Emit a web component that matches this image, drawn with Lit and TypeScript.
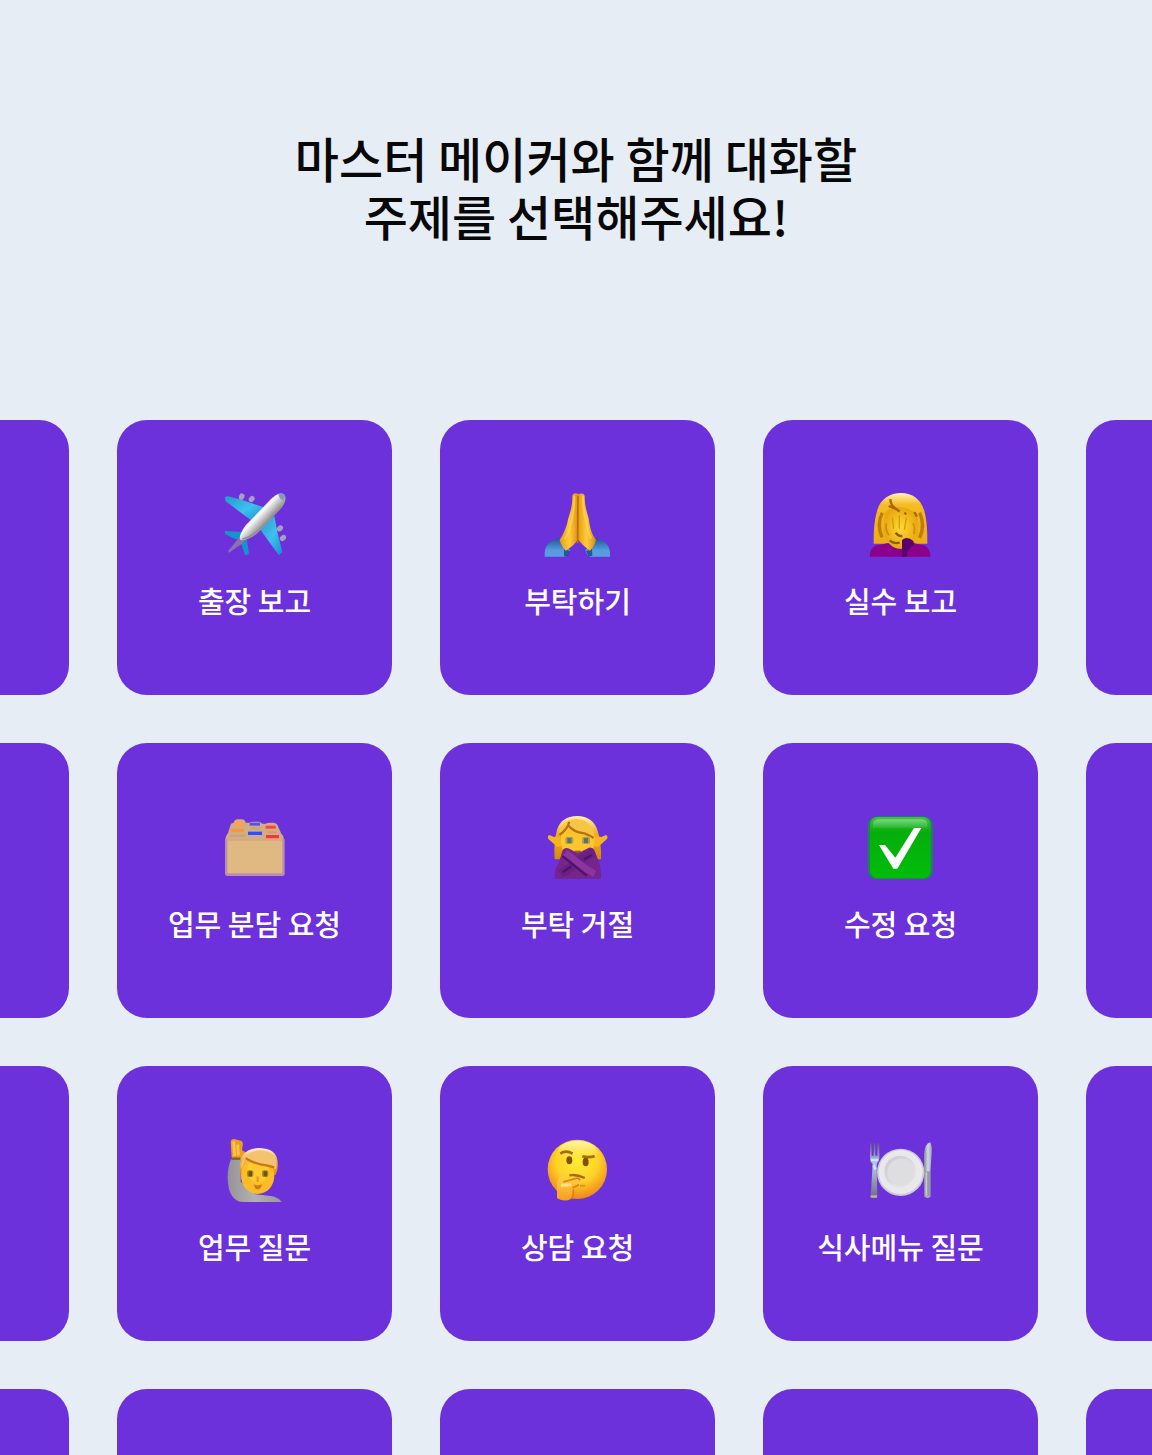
import { LitElement, html, svg, css, type TemplateResult, type SVGTemplateResult } from "lit";
import { customElement } from "lit/decorators.js";

interface Topic {
  label: string;
  icon: SVGTemplateResult;
}

const airplane = svg`
  <defs>
    <linearGradient id="wing" x1="0" y1="0" x2="1" y2="1"><stop offset="0" stop-color="#2498c8"/><stop offset=".55" stop-color="#3fc0f0"/><stop offset="1" stop-color="#168fc8"/></linearGradient>
    <linearGradient id="body" gradientUnits="userSpaceOnUse" x1="148" y1="90" x2="182" y2="122"><stop offset="0" stop-color="#e2e2e4"/><stop offset=".45" stop-color="#f6f6f6"/><stop offset="1" stop-color="#a3a0a4"/></linearGradient>
  </defs>
  <g fill="#a99fc0"><ellipse cx="110" cy="50" rx="8" ry="10" transform="rotate(25 110 50)"/><ellipse cx="140" cy="57" rx="8" ry="10" transform="rotate(40 140 57)"/><ellipse cx="225" cy="145" rx="8" ry="10" transform="rotate(45 225 145)"/><ellipse cx="234" cy="174" rx="8" ry="10" transform="rotate(50 234 174)"/></g>
  <path d="M59 53 66 48 112 60 176 82 140 122 62 64Z" fill="url(#wing)"/>
  <path d="M208 108 218 160 232 216 222 226 162 144Z" fill="url(#wing)"/>
  <path d="M59 153 114 156 106 179 88 176 60 162Z" fill="#1793c9"/>
  <path d="M104 178 126 180 132 222 120 226Z" fill="#1793c9"/>
  <path d="M108 166 69 214 72 218 118 186Z" fill="#8872b4"/>
  <path d="M237 43c9 10 4 27-8 41l-66 70c-17 17-36 26-49 27-12 1-11-9-7-19 5-12 12-24 24-35l62-65c16-16 31-27 44-19Z" fill="url(#body)"/>
  <path d="M220 41q17-3 20 6 0 9-6 14Q222 56 220 41Z" fill="#7f9eb1"/>
  <path d="M112 177Q142 171 172 140L230 79" fill="none" stroke="#918d92" stroke-width="5"/>`;

const prayer = svg`
  <defs>
    <linearGradient id="handL" x1="0" x2="1"><stop offset="0" stop-color="#e89a14"/><stop offset=".5" stop-color="#ffcb3c"/><stop offset="1" stop-color="#d88a12"/></linearGradient>
    <linearGradient id="cuff" x1="0" y1="0" x2="0" y2="1"><stop offset="0" stop-color="#1c5798"/><stop offset=".65" stop-color="#559bdc"/><stop offset="1" stop-color="#5b9ee3"/></linearGradient>
  </defs>
  <path d="M92 174 126 210Q120 229 108 230H50q-2-26 12-40 12-11 30-16Z" fill="url(#cuff)"/>
  <path d="M206 174 172 210q4 19 16 20h58q2-26-12-40-10-11-28-16Z" fill="url(#cuff)"/>
  <path d="m108 206 18 8-7 14h-11ZM192 206l-18 8 7 14h12Z" fill="#12447e" opacity=".75"/>
  <path d="M153 42q-17-6-20 5c1 27-5 46-12 68-4 25-14 47-26 65 4 14 10 24 18 32 18-10 33-25 38-37Z" fill="url(#handL)"/>
  <path d="M150 42q18-5 20 5c0 26 5 47 12 68 3 25 8 47 22 65-3 13-10 24-18 32-15-11-31-24-37-37Z" fill="url(#handL)"/>
  <path d="M150 47 149 190" stroke="#bc7008" stroke-width="5"/>
  <path d="M139 49Q140 90 128 133q-5 27-18 44M165 49q-1 43 11 85 5 25 14 42" fill="none" stroke="#ffd951" stroke-width="5" opacity=".75"/>`;

const facepalm = svg`
  <defs>
    <linearGradient id="hairA" x1="0" y1="0" x2="0" y2="1"><stop offset="0" stop-color="#fff1b3"/><stop offset=".23" stop-color="#f5bc24"/><stop offset="1" stop-color="#edab16"/></linearGradient>
    <radialGradient id="palm"><stop offset="0" stop-color="#ffd833"/><stop offset="1" stop-color="#e7a80e"/></radialGradient>
  </defs>
  <path d="M68 191c0-27 0-66 11-101 10-34 38-51 71-51 36 0 60 20 70 54 9 34 9 67 9 98Z" fill="url(#hairA)"/>
  <path d="M94 98Q76 133 93 172M206 98q17 39 0 76" fill="none" stroke="#b06f08" stroke-width="10" opacity=".8"/>
  <path d="M101 98q18-17 48-17 36 2 52 34 4 51-15 69l-30 22h-24q-29-19-34-55Z" fill="url(#palm)"/>
  <path d="M118 57q0 17 14 27l14 11M113 78l20 8M160 98l6 5M190 96l8 14" stroke="#a8690c" stroke-width="7" fill="none"/>
  <path d="M124 112l4 34M145 106v40M166 112l-6 38" stroke="#d99a0c" stroke-width="4" fill="none"/>
  <path d="M106 130q-4 18 8 36M186 130q8 12 2 32" stroke="#cf8c0c" stroke-width="5" fill="none"/>
  <path d="M134 158q8 12 20 10M116 182q12 10 30 6" stroke="#8a5a10" stroke-width="7" fill="none"/>
  <path d="M56 230q0-25 17-33l39-8q14 18 41 19l5-28q18-8 32 10l32 7q15 9 17 33Z" fill="#8b008c"/>
  <path d="M153 230V180q15-14 34 3l2 14q-20 5-22 33Z" fill="#5c006d"/>`;

const folders = svg`
  <path d="M86 59q3-10 12-10h12q9 0 12 10h11q3-3 10-3h16q8 0 13 6h10q5-3 12-3h11q13 1 15 14l9 19q8 6 8 18H62q-2-9 7-20l9-28Z" fill="#d2ac84"/>
  <path d="M88 68v-8q2-6 10-6h11q7 1 8 14Z" fill="#ffa14d"/>
  <path d="M79 77h38v10H78Z" fill="#f99736"/>
  <path d="M134 59h31v9h-31Z" fill="#5354e2"/>
  <path d="M129 86h42v10h-42Z" fill="#304dff"/>
  <path d="M182 68h30v9h-30Z" fill="#fa433f"/>
  <path d="M183 96h39v10h-39Z" fill="#ff3039"/>
  <path d="M136 76h30M188 88h27M76 98h46" stroke="#c9a078" stroke-width="5"/>
  <path d="M60 108h179v104q0 7-7 7H67q-7 0-7-7Z" fill="#ba8eb0"/>
  <path d="M67 107h165v104H67Z" fill="#dfb882"/>
  <path d="M67 110h165" stroke="#d3aa80" stroke-width="6"/>`;

const refusal = svg`
  <defs><linearGradient id="hairB" x1="0" y1="0" x2="0" y2="1"><stop offset="0" stop-color="#fff1b2"/><stop offset=".4" stop-color="#f0b01d"/><stop offset="1" stop-color="#d48a0d"/></linearGradient></defs>
  <path d="M80 169q-4-50 7-88 12-41 61-42 47 2 60 42 13 37 11 88Z" fill="url(#hairB)"/>
  <path d="m88 132-26-23q-6-9 2-13l14 6 16-2 12 28ZM210 132l26-23q6-9-2-13l-14 6-16-2-12 28Z" fill="#f6b51f"/>
  <path d="M98 95q10-22 50-20 44-1 53 25-1 45-20 62h-64q-20-17-19-67Z" fill="#ffc52e"/>
  <path d="M96 100q11-31 29-46 3 24 37 32 24 5 38 18-3-30-25-48-28-15-57-1-29 17-22 45Z" fill="#f6c545"/>
  <path d="M124 56q-5 22-30 40M120 66q15 21 49 25 18 6 28 14" stroke="#b9730e" stroke-width="7" fill="none"/>
  <rect x="112" y="101" width="24" height="22" rx="6" fill="#b0a04c"/>
  <rect x="162" y="101" width="24" height="22" rx="6" fill="#b0a04c"/>
  <path d="M118 105h12v15h-12ZM168 105h12v15h-12Z" fill="#5f7064"/>
  <path d="M140 143h18v9h-18Z" fill="#9f600f"/>
  <path d="M80 227q-2-29 12-46l12-40q8-10 20-4l25 14 28-14q14-9 22 4l14 36q7 20 6 50Z" fill="#75258b"/>
  <path d="M198 148q-28 12-50 30t-50 34" fill="none" stroke="#6a1f82" stroke-width="26"/>
  <path d="M112 148q24 20 44 36t44 28" fill="none" stroke="#8c34a0" stroke-width="20"/>
  <path d="M104 160q22 16 38 30l34 28M192 156q-14 6-24 14M130 190l-26 18" fill="none" stroke="#4f126b" stroke-width="7"/>`;

const check = svg`
  <defs>
    <linearGradient id="green" x1="0" y1="0" x2="0" y2="1"><stop offset="0" stop-color="#44be48"/><stop offset=".25" stop-color="#05ae0b"/><stop offset="1" stop-color="#00bd0b"/></linearGradient>
    <linearGradient id="shine" x1="0" y1="0" x2="0" y2="1"><stop offset="0" stop-color="#8ee392"/><stop offset="1" stop-color="#36b93c"/></linearGradient>
  </defs>
  <rect x="50" y="40" width="196" height="189" rx="27" fill="#207f61"/>
  <rect x="57" y="42" width="182" height="184" rx="23" fill="url(#green)"/>
  <path d="M66 74V61q3-11 16-12h132q12 1 15 12v13Z" fill="url(#shine)" opacity=".72"/>
  <path d="M84 126h18l31 38 56-89h22l-72 122h-12Z" fill="#fff"/>`;

const handUp = svg`
  <defs>
    <linearGradient id="shirt" x1="0" x2="1"><stop offset="0" stop-color="#969398"/><stop offset=".5" stop-color="#b3b1b3"/><stop offset="1" stop-color="#9b959f"/></linearGradient>
    <linearGradient id="hairC" x1="0" y1="0" x2="0" y2="1"><stop offset="0" stop-color="#fff0d0"/><stop offset=".38" stop-color="#f3ba55"/><stop offset="1" stop-color="#dc8d0b"/></linearGradient>
  </defs>
  <path d="M78 100Q68 123 68 156q1 35 11 50 13 22 36 22h115q-9-14-33-18l-45-5-45-38V100Z" fill="url(#shirt)"/>
  <path d="M80 94 77 48q2-11 13-8l18 4q8 4 5 15l-2 14 13 7-2 13-14 8H86Z" fill="#e8a026"/>
  <path d="M86 46 89 90M98 56l2 32" stroke="#ffc44b" stroke-width="8"/>
  <path d="M80 98h26" stroke="#7d6032" stroke-width="7"/>
  <path d="M106 142q-6-40 10-57 14-18 45-19 46 0 55 31 6 27-4 50Z" fill="url(#hairC)"/>
  <ellipse cx="158" cy="149" rx="50" ry="55" fill="#fcbc26"/>
  <ellipse cx="158" cy="132" rx="32" ry="38" fill="#ffc931"/>
  <path d="M109 130 124 92q14 18 32 20 30 0 56 18 9-34-19-51-36-15-66 7-21 18-18 44Z" fill="#f3c372"/>
  <path d="m122 97 17 9q24 10 46 12l23 6" fill="none" stroke="#c87a0d" stroke-width="7"/>
  <rect x="126" y="133" width="19" height="20" rx="6" fill="#a98a1c"/>
  <rect x="171" y="133" width="19" height="20" rx="6" fill="#a98a1c"/>
  <path d="M131 136h10v15h-10ZM176 136h10v15h-10Z" fill="#625817"/>
  <path d="M158 152v16" stroke="#e8981a" stroke-width="7"/>
  <path d="M146 175q12 6 25 0-3 15-12 15-10 0-13-15Z" fill="#d07a16"/>`;

const thinking = svg`
  <defs>
    <radialGradient id="face" cx=".5" cy=".35" r=".65"><stop offset="0" stop-color="#ffec36"/><stop offset=".55" stop-color="#ffd229"/><stop offset="1" stop-color="#ee8619"/></radialGradient>
    <linearGradient id="glow" x1="0" y1="0" x2="0" y2="1"><stop offset="0" stop-color="#fff6bb"/><stop offset="1" stop-color="#ffe93a" stop-opacity="0"/></linearGradient>
    <linearGradient id="thumb" x1="0" y1="0" x2="0" y2="1"><stop offset="0" stop-color="#ffd14e"/><stop offset="1" stop-color="#f69d19"/></linearGradient>
  </defs>
  <circle cx="148" cy="130" r="89" fill="url(#face)"/>
  <ellipse cx="149" cy="76" rx="58" ry="31" fill="url(#glow)"/>
  <path d="M97 83q16-12 37 0M163 91q18 5 37 0" fill="none" stroke="#a66d0f" stroke-width="8"/>
  <ellipse cx="124" cy="103" rx="9" ry="12" fill="#815000"/>
  <ellipse cx="173" cy="108" rx="9" ry="13" fill="#815000"/>
  <path d="M124 148q21-4 46 8" fill="none" stroke="#a46b0b" stroke-width="7"/>
  <path d="M87 217V174q0-12 10-22 8-2 8 7l2 9 37-10q10-3 13 5 2 8-8 12l-14 8q0 24-7 36-18 10-41-2Z" fill="url(#thumb)"/>
  <path d="m106 168 38-11q9-2 12 6M134 185l19-9M136 190q2 18-6 28" fill="none" stroke="#db8117" stroke-width="5"/>
  <path d="M99 178 130 176" stroke="#ffe17c" stroke-width="10"/>
  <path d="M156 179h15" stroke="#d8950f" stroke-width="5"/>`;

const plate = svg`
  <defs>
    <linearGradient id="metal" x1="0" y1="0" x2="0" y2="1"><stop offset="0" stop-color="#64558d"/><stop offset=".38" stop-color="#b8cce0"/><stop offset="1" stop-color="#6b6981"/></linearGradient>
    <linearGradient id="blade" x1="0" x2="1"><stop offset="0" stop-color="#858797"/><stop offset=".5" stop-color="#d1dae2"/><stop offset="1" stop-color="#9da2bd"/></linearGradient>
    <linearGradient id="dish" x1="0" y1="0" x2="1" y2="1"><stop offset="0" stop-color="#c8c8ce"/><stop offset="1" stop-color="#eeeeef"/></linearGradient>
  </defs>
  <path d="M57 52h5v37h6V51h5v38h6V51h6v44q0 12-8 18l2 101q-10 6-20 0l6-101q-8-5-8-18Z" fill="url(#metal)"/>
  <path d="M60 102h22M67 118l7 12" stroke="#c1ecf7" stroke-width="7"/>
  <path d="M59 208h19v7H59Z" fill="#c1b3a5"/>
  <path d="M219 140V83q3-31 19-34 6 12 4 34l-4 57v73q-9 5-18 0Z" fill="url(#blade)"/>
  <path d="M221 136h17v76h-17Z" fill="#9a9aa6"/>
  <path d="M226 139v70" stroke="#c8c9ce" stroke-width="5"/>
  <circle cx="149" cy="139" r="71" fill="#cfc9dc"/>
  <circle cx="149" cy="138" r="66" fill="#e9e9eb"/>
  <circle cx="148" cy="137" r="48" fill="url(#dish)"/>
  <circle cx="150" cy="139" r="41" fill="#dedee0"/>`;

const ROWS: Topic[][] = [
  [
    { label: "출장 보고", icon: airplane },
    { label: "부탁하기", icon: prayer },
    { label: "실수 보고", icon: facepalm },
  ],
  [
    { label: "업무 분담 요청", icon: folders },
    { label: "부탁 거절", icon: refusal },
    { label: "수정 요청", icon: check },
  ],
  [
    { label: "업무 질문", icon: handUp },
    { label: "상담 요청", icon: thinking },
    { label: "식사메뉴 질문", icon: plate },
  ],
];

@customElement("app-root")
export class AppRoot extends LitElement {
  static styles = css`
    :host {
      display: block;
      height: 100vh;
      overflow: hidden;
      background: #e6edf5;
      font-family: "Noto Sans CJK KR", "Noto Sans", sans-serif;
    }
    .page {
      display: flex;
      flex-direction: column;
      gap: 176px;
      padding-top: 128px;
    }
    .title {
      margin: 0;
      text-align: center;
      font-size: 48px;
      line-height: 58px;
      font-weight: 500;
      color: #080808;
    }
    /* Five columns stay centred; the outer ones bleed past the window. */
    .board {
      display: grid;
      grid-template-columns: repeat(5, 275px);
      grid-auto-rows: 275px;
      gap: 48px;
      justify-content: center;
      padding-left: 3px;
    }
    .card {
      box-sizing: border-box;
      display: flex;
      flex-direction: column;
      align-items: center;
      gap: 10px;
      margin: 0;
      padding: 60px 0 0;
      border: 0;
      border-radius: 30px;
      background: #6c31da;
      color: #fff;
      font: inherit;
      cursor: pointer;
    }
    .blank {
      cursor: default;
    }
    .icon {
      display: block;
      width: 100px;
      height: 90px;
    }
    .label {
      font-size: 29px;
      line-height: 40px;
      font-weight: 500;
      white-space: nowrap;
    }
  `;

  private blank(): TemplateResult {
    return html`<div class="card blank" aria-hidden="true"></div>`;
  }

  private card(topic: Topic): TemplateResult {
    return html`<button class="card" type="button">
      <svg class="icon" viewBox="0 0 300 270" aria-hidden="true">${topic.icon}</svg>
      <span class="label">${topic.label}</span>
    </button>`;
  }

  render() {
    return html`<main class="page">
      <h1 class="title">마스터 메이커와 함께 대화할<br />주제를 선택해주세요!</h1>
      <section class="board">
        ${ROWS.map((row) => [this.blank(), row.map((topic) => this.card(topic)), this.blank()])}
        ${Array.from({ length: 5 }, () => this.blank())}
      </section>
    </main>`;
  }
}
